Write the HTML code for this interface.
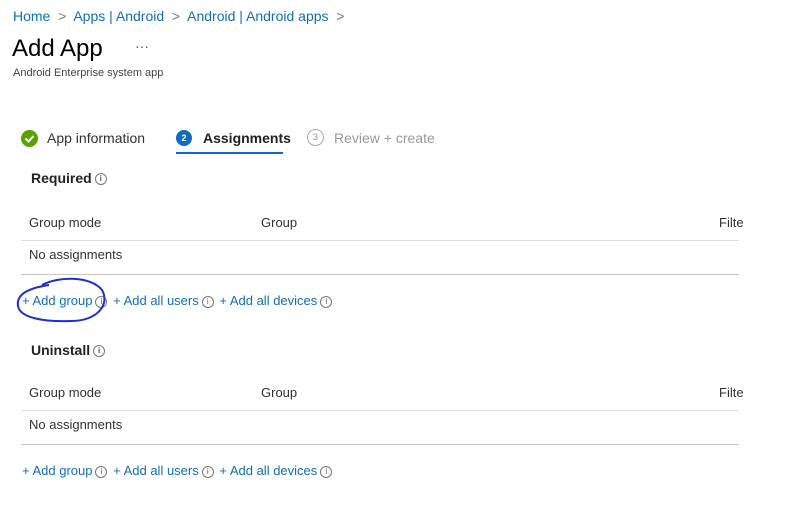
<!DOCTYPE html>
<html><head><style>
body{margin:0;width:795px;height:521px;background:#fff;font-family:"Liberation Sans",sans-serif;color:#323130;position:relative;overflow:hidden}
.a{position:absolute;white-space:nowrap}
.l{color:#106ebe}
.i{display:inline-block;width:10px;height:10px;border:1px solid #777;border-radius:50%;font-size:8px;line-height:10px;text-align:center;color:#555;vertical-align:middle;margin:0 2px 0 3px}
.hr{position:absolute;left:21px;width:718px;height:1px;background:#e1dfdd}
.lk{font-size:13px}
</style></head><body>
<div class="a l" style="left:13px;top:8px;font-size:14px">Home <span style="color:#777">&nbsp;&gt;&nbsp;</span> Apps | Android <span style="color:#777">&nbsp;&gt;&nbsp;</span> Android | Android apps <span style="color:#777">&nbsp;&gt;</span></div>
<div class="a" style="left:12px;top:35px;font-size:24px;color:#000">Add App</div>
<div class="a" style="left:135px;top:38px;font-size:14px;color:#555">···</div>
<div class="a" style="left:13px;top:67px;font-size:11px;color:#444">Android Enterprise system app</div>
<div class="a" style="left:21px;top:130px;width:17px;height:17px;border-radius:50%;background:#57a300"><svg width="17" height="17"><path d="M4.5 8.5l3 3 5-5.5" stroke="#fff" stroke-width="2" fill="none"/></svg></div>
<div class="a" style="left:47px;top:130px;font-size:14px">App information</div>
<div class="a" style="left:176px;top:130px;width:16px;height:16px;border-radius:50%;background:#0f6cbd;color:#fff;font-size:9px;line-height:16px;text-align:center;font-weight:bold">2</div>
<div class="a" style="left:203px;top:130px;font-size:14px;font-weight:bold;color:#222">Assignments</div>
<div class="a" style="left:176px;top:152px;width:107px;height:2px;background:#0f6cbd"></div>
<div class="a" style="left:307px;top:129px;width:15px;height:15px;border-radius:50%;border:1px solid #aaa;color:#999;font-size:9px;line-height:15px;text-align:center">3</div>
<div class="a" style="left:334px;top:130px;font-size:14px;color:#999">Review + create</div>

<div class="a" style="left:31px;top:170px;font-size:14px;font-weight:bold;color:#222">Required<span class="i">i</span></div>
<div class="a" style="left:29px;top:215px;font-size:13px">Group mode</div>
<div class="a" style="left:261px;top:215px;font-size:13px">Group</div>
<div class="a" style="left:719px;top:215px;font-size:13px">Filte</div>
<div class="hr" style="top:240px"></div>
<div class="a" style="left:29px;top:247px;font-size:13px">No assignments</div>
<div class="hr" style="top:274px;background:#c8c6c4"></div>
<div class="a l lk" style="left:22px;top:293px">+ Add group<span class="i">i</span> + Add all users<span class="i">i</span> + Add all devices<span class="i">i</span></div>
<svg class="a" style="left:14px;top:276px" width="94" height="50"><path d="M28 9C45 0 77 0 88 14C96 28 84 45 57 45C30 46 6 42 4 30C2 18 15 12 35 9" stroke="#1c2fd6" stroke-width="2" fill="none"/></svg>

<div class="a" style="left:31px;top:342px;font-size:14px;font-weight:bold;color:#222">Uninstall<span class="i">i</span></div>
<div class="a" style="left:29px;top:385px;font-size:13px">Group mode</div>
<div class="a" style="left:261px;top:385px;font-size:13px">Group</div>
<div class="a" style="left:719px;top:385px;font-size:13px">Filte</div>
<div class="hr" style="top:410px"></div>
<div class="a" style="left:29px;top:417px;font-size:13px">No assignments</div>
<div class="hr" style="top:444px;background:#c8c6c4"></div>
<div class="a l lk" style="left:22px;top:463px">+ Add group<span class="i">i</span> + Add all users<span class="i">i</span> + Add all devices<span class="i">i</span></div>
</body></html>
